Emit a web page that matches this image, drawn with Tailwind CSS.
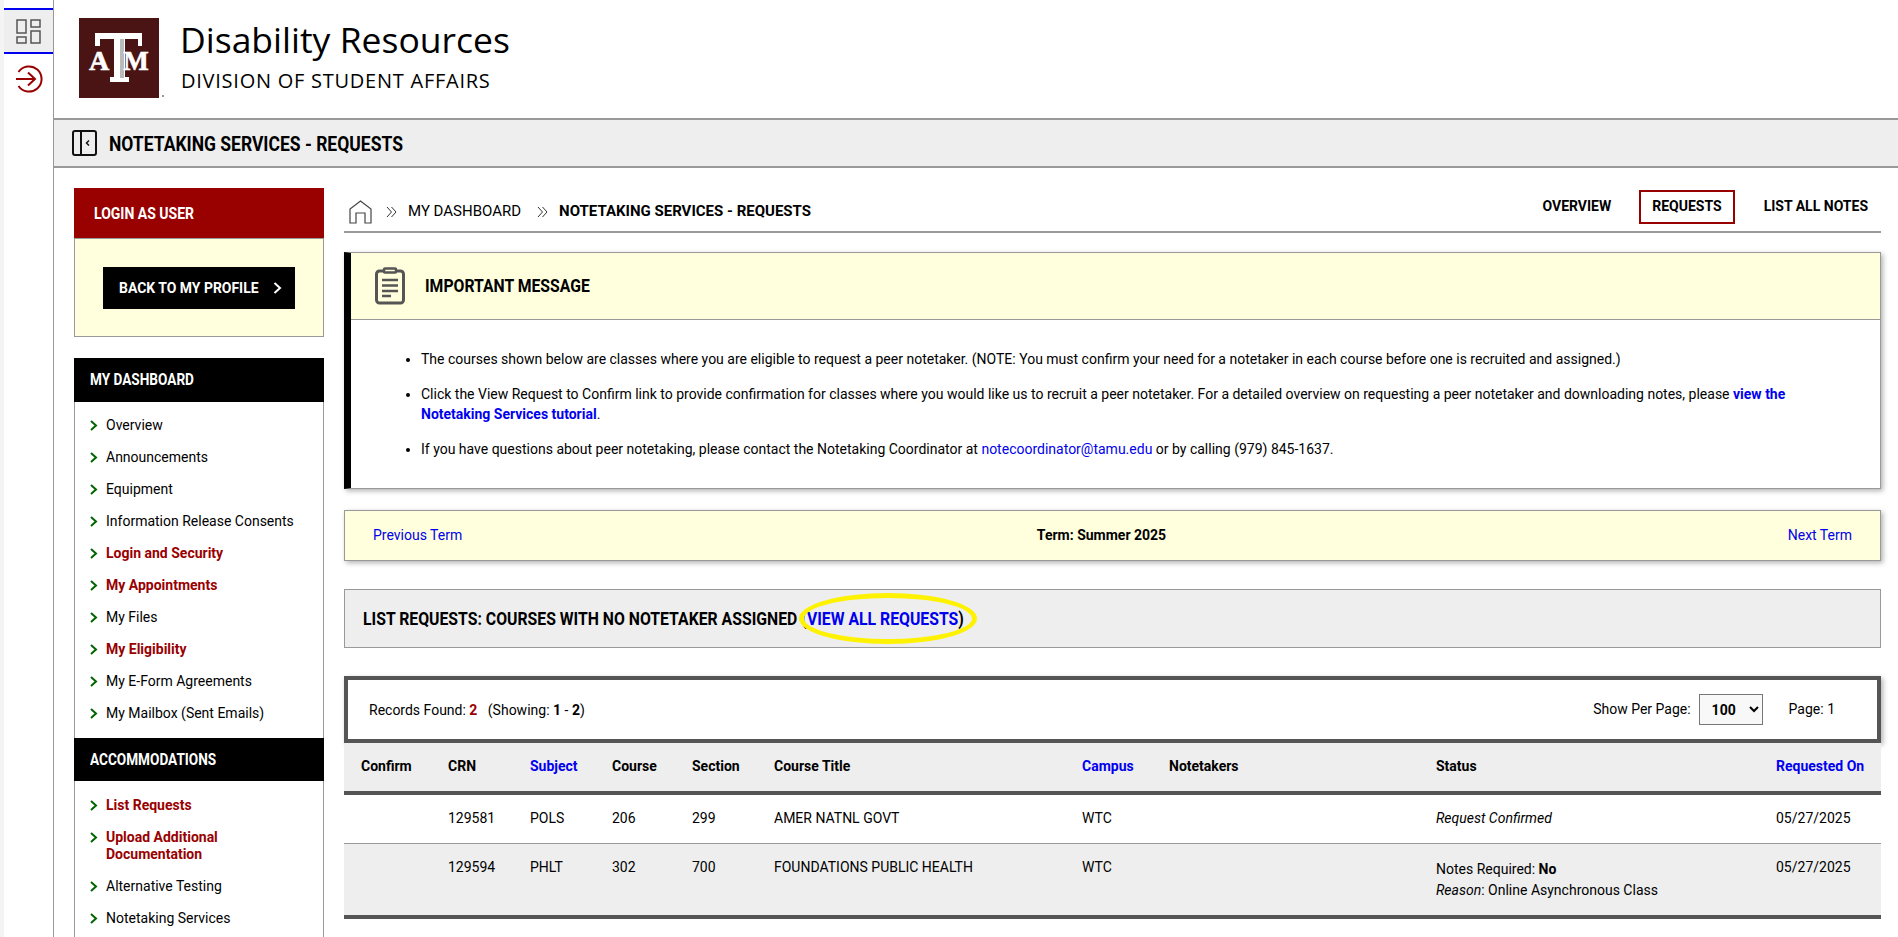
<!DOCTYPE html>
<html lang="en">
<head>
    <meta charset="UTF-8">
    <title>Notetaking Services - Requests</title>
    <script src="https://cdn.jsdelivr.net/npm/@tailwindcss/browser@4"></script>
</head>
<body class="bg-white text-black font-['Roboto',sans-serif] text-[14px] leading-[17px]">
<div class="flex h-[937px] overflow-hidden">

    <!-- Icon rail -->
    <div class="w-[54px] shrink-0 pl-[4px] bg-[#f4f4f4]">
        <div class="h-full bg-white border-r border-[#999] pt-[8px]">
            <div class="h-[46px] bg-[#eeeeee] border-y-2 border-[#0000ee] flex items-center justify-center">
                <svg width="26" height="25" viewBox="0 0 26 25" fill="none" stroke="#555" stroke-width="1.5">
                    <rect x="1" y="1" width="9" height="13"/>
                    <rect x="15" y="1" width="9" height="7"/>
                    <rect x="1" y="18" width="9" height="6"/>
                    <rect x="15" y="12" width="9" height="12"/>
                </svg>
            </div>
            <div class="pl-[11px] pt-[11px]">
                <svg width="28" height="28" viewBox="0 0 28 28" fill="none" stroke="#990000" stroke-width="2">
                    <path d="M3.5 7A12.6 12.6 0 1 1 3.5 21"/>
                    <path d="M1 14H20M13 7.5L20 14L13 20.5"/>
                </svg>
            </div>
        </div>
    </div>

    <div class="flex-1 min-w-0">
        <!-- Site header -->
        <div class="h-[118px] flex pl-[25px] pt-[18px]">
            <svg width="85" height="82" viewBox="0 0 85 82" class="shrink-0">
                <rect x="0" y="0" width="80" height="80" fill="#4a1414"/>
                <path d="M16 15H63V28H59V21H46V59H50V64H31V59H35V21H21V28H16Z" fill="#fff"/>
                <path d="M41 21H45V60H41Z" fill="#bbb"/>
                <text x="20" y="52" text-anchor="middle" fill="#fff" stroke="#fff" stroke-width="0.6" font-family="Liberation Serif" font-weight="700" font-size="28">A</text>
                <text x="57" y="52" text-anchor="middle" fill="#fff" stroke="#fff" stroke-width="0.6" font-family="Liberation Serif" font-weight="700" font-size="27">M</text>
                <circle cx="84" cy="78" r="1" fill="#777"/>
            </svg>
            <div class="ml-[17px] font-['Open_Sans',sans-serif]">
                <div class="text-[35.500px] leading-[44px] mt-[-1px] ml-[-1px]">Disability Resources</div>
                <div class="text-[20px] leading-[26px] mt-[7px] font-medium tracking-[0.75px]">DIVISION OF STUDENT AFFAIRS</div>
            </div>
        </div>

        <!-- Page title bar -->
        <div class="h-[50px] bg-[#eeeeee] border-y-2 border-[#999] flex items-center pl-[18px]">
            <svg width="25" height="26" viewBox="0 0 25 26" fill="none" stroke="#111" class="shrink-0">
                <rect x="1" y="1" width="23" height="24" rx="2" stroke-width="2"/>
                <path d="M9 1V25" stroke-width="2"/>
                <path d="M17 10.5L14.5 13L17 15.5" stroke-width="1.5"/>
            </svg>
            <h1 class="ml-[12px] text-[20px] font-bold leading-[24px] whitespace-nowrap origin-left scale-x-[.875] mt-[1px]">NOTETAKING SERVICES - REQUESTS</h1>
        </div>

        <div class="flex pl-[20px] pr-[17px] pt-[20px] gap-[20px]">
            <!-- Sidebar -->
            <aside class="w-[250px] shrink-0">
                <div class="h-[50px] bg-[#990000] text-white font-bold text-[16px] flex items-center pl-[20px]"><span class="origin-left scale-x-[.875]">LOGIN AS USER</span></div>
                <div class="h-[99px] bg-[#ffffdd] border border-t-[#999] border-[#999] pt-[28px] pl-[28px]">
                    <a class="w-[192px] h-[42px] bg-black text-white font-bold text-[15px] flex items-center pl-[16px] pr-[13px]">
                        <span class="origin-left scale-x-[.93] whitespace-nowrap">BACK TO MY PROFILE</span>
                        <svg width="9" height="12" viewBox="0 0 9 12" fill="none" stroke="#fff" stroke-width="2" class="ml-auto"><path d="M1.5 1L7 6L1.5 11"/></svg>
                    </a>
                </div>

                <div class="mt-[21px] h-[44px] pb-[1px] bg-black text-white font-bold text-[16px] flex items-center pl-[16px]"><span class="origin-left scale-x-[.85]">MY DASHBOARD</span></div>
                <ul class="border-x border-[#999] pt-[15px] pb-[1px] pl-[15px] pr-[15px] h-[336px]">
                    <li class="flex mb-[15px]"><svg width="8" height="11" viewBox="0 0 8 11" fill="none" stroke="#006600" stroke-width="2" class="mt-[3px] mr-[8px] shrink-0"><path d="M1 1L6 5.5L1 10"/></svg>Overview</li>
                    <li class="flex mb-[15px]"><svg width="8" height="11" viewBox="0 0 8 11" fill="none" stroke="#006600" stroke-width="2" class="mt-[3px] mr-[8px] shrink-0"><path d="M1 1L6 5.5L1 10"/></svg>Announcements</li>
                    <li class="flex mb-[15px]"><svg width="8" height="11" viewBox="0 0 8 11" fill="none" stroke="#006600" stroke-width="2" class="mt-[3px] mr-[8px] shrink-0"><path d="M1 1L6 5.5L1 10"/></svg>Equipment</li>
                    <li class="flex mb-[15px]"><svg width="8" height="11" viewBox="0 0 8 11" fill="none" stroke="#006600" stroke-width="2" class="mt-[3px] mr-[8px] shrink-0"><path d="M1 1L6 5.5L1 10"/></svg>Information Release Consents</li>
                    <li class="flex mb-[15px] font-bold text-[#990000]"><svg width="8" height="11" viewBox="0 0 8 11" fill="none" stroke="#006600" stroke-width="2" class="mt-[3px] mr-[8px] shrink-0"><path d="M1 1L6 5.5L1 10"/></svg>Login and Security</li>
                    <li class="flex mb-[15px] font-bold text-[#990000]"><svg width="8" height="11" viewBox="0 0 8 11" fill="none" stroke="#006600" stroke-width="2" class="mt-[3px] mr-[8px] shrink-0"><path d="M1 1L6 5.5L1 10"/></svg>My Appointments</li>
                    <li class="flex mb-[15px]"><svg width="8" height="11" viewBox="0 0 8 11" fill="none" stroke="#006600" stroke-width="2" class="mt-[3px] mr-[8px] shrink-0"><path d="M1 1L6 5.5L1 10"/></svg>My Files</li>
                    <li class="flex mb-[15px] font-bold text-[#990000]"><svg width="8" height="11" viewBox="0 0 8 11" fill="none" stroke="#006600" stroke-width="2" class="mt-[3px] mr-[8px] shrink-0"><path d="M1 1L6 5.5L1 10"/></svg>My Eligibility</li>
                    <li class="flex mb-[15px]"><svg width="8" height="11" viewBox="0 0 8 11" fill="none" stroke="#006600" stroke-width="2" class="mt-[3px] mr-[8px] shrink-0"><path d="M1 1L6 5.5L1 10"/></svg>My E-Form Agreements</li>
                    <li class="flex"><svg width="8" height="11" viewBox="0 0 8 11" fill="none" stroke="#006600" stroke-width="2" class="mt-[3px] mr-[8px] shrink-0"><path d="M1 1L6 5.5L1 10"/></svg>My Mailbox (Sent Emails)</li>
                </ul>
                <div class="h-[43px] bg-black text-white font-bold text-[16px] flex items-center pl-[16px]"><span class="origin-left scale-x-[.85]">ACCOMMODATIONS</span></div>
                <ul class="border-x border-[#999] pt-[16px] pl-[15px] pr-[15px] h-[200px]">
                    <li class="flex mb-[15px] font-bold text-[#990000]"><svg width="8" height="11" viewBox="0 0 8 11" fill="none" stroke="#006600" stroke-width="2" class="mt-[3px] mr-[8px] shrink-0"><path d="M1 1L6 5.5L1 10"/></svg>List Requests</li>
                    <li class="flex mb-[15px] font-bold text-[#990000]"><svg width="8" height="11" viewBox="0 0 8 11" fill="none" stroke="#006600" stroke-width="2" class="mt-[3px] mr-[8px] shrink-0"><path d="M1 1L6 5.5L1 10"/></svg><span>Upload Additional<br>Documentation</span></li>
                    <li class="flex mb-[15px]"><svg width="8" height="11" viewBox="0 0 8 11" fill="none" stroke="#006600" stroke-width="2" class="mt-[3px] mr-[8px] shrink-0"><path d="M1 1L6 5.5L1 10"/></svg>Alternative Testing</li>
                    <li class="flex"><svg width="8" height="11" viewBox="0 0 8 11" fill="none" stroke="#006600" stroke-width="2" class="mt-[3px] mr-[8px] shrink-0"><path d="M1 1L6 5.5L1 10"/></svg>Notetaking Services</li>
                </ul>
            </aside>

            <!-- Main column -->
            <main class="flex-1 min-w-0">
                <div class="h-[45px] border-b-2 border-[#999] flex items-start justify-between pl-[5px]">
                    <div class="flex items-center h-[37px] pt-[10px] text-[15px]">
                        <svg width="23" height="24" viewBox="0 0 23 24" fill="none" stroke="#444" stroke-width="1.2" class="shrink-0">
                            <path d="M1 23V9L11.5 1L22 9V23H16V13H7V23Z"/>
                        </svg>
                        <svg width="11" height="12" viewBox="0 0 11 12" fill="none" stroke="#333" class="ml-[14px]"><path d="M1 1L5.500 6L1 11M5.500 1L10 6L5.500 11"/></svg>
                        <span class="ml-[11px]">MY DASHBOARD</span>
                        <svg width="11" height="12" viewBox="0 0 11 12" fill="none" stroke="#333" class="ml-[16px]"><path d="M1 1L5.500 6L1 11M5.500 1L10 6L5.500 11"/></svg>
                        <span class="ml-[11px] font-bold">NOTETAKING SERVICES - REQUESTS</span>
                    </div>
                    <nav class="flex items-center font-bold mt-[2px] pr-[13px]">
                        <a class="mb-[1px]">OVERVIEW</a>
                        <a class="ml-[28px] h-[34px] border-2 border-[#990000] px-[11px] pb-[1px] flex items-center">REQUESTS</a>
                        <a class="ml-[29px] mb-[1px]">LIST ALL NOTES</a>
                    </nav>
                </div>

                <!-- Important message -->
                <section class="mt-[19px] h-[237px] border-l-[7px] border-l-black border-y border-r border-[#999] shadow-[2px_2px_5px_rgba(0,0,0,0.3)]">
                    <div class="h-[67px] pb-[1px] bg-[#ffffdd] border-b border-[#999] flex items-center pl-[24px]">
                        <svg width="30" height="38" viewBox="0 0 30 38" fill="none" stroke="#555" class="shrink-0">
                            <rect x="1.5" y="4" width="27" height="32" rx="3" stroke-width="3"/>
                            <rect x="9" y="1.5" width="12" height="4" rx="1" stroke-width="2.5" fill="#ffffdd"/>
                            <path d="M7 13H23M7 18.500H23M7 24H23M7 29H16" stroke-width="2.500"/>
                        </svg>
                        <h2 class="ml-[20px] font-bold text-[18px] whitespace-nowrap origin-left scale-x-[.875]">IMPORTANT MESSAGE</h2>
                    </div>
                    <ul class="list-disc pl-[70px] pr-[40px] pt-[29px] leading-[20px]">
                        <li>The courses shown below are classes where you are eligible to request a peer notetaker. (NOTE: You must confirm your need for a notetaker in each course before one is recruited and assigned.)</li>
                        <li class="mt-[15px]">Click the View Request to Confirm link to provide confirmation for classes where you would like us to recruit a peer notetaker. For a detailed overview on requesting a peer notetaker and downloading notes, please <a class="font-bold text-[#0000ee]">view the Notetaking Services tutorial</a>.</li>
                        <li class="mt-[15px]">If you have questions about peer notetaking, please contact the Notetaking Coordinator at <a class="text-[#0000ee]">notecoordinator@tamu.edu</a> or by calling (979) 845-1637.</li>
                    </ul>
                </section>

                <!-- Term switcher -->
                <div class="mt-[21px] h-[51px] bg-[#ffffdd] border border-[#999] shadow-[2px_2px_5px_rgba(0,0,0,0.3)] grid grid-cols-3 items-center px-[28px]">
                    <a class="text-[#0000ee]">Previous Term</a>
                    <div class="text-center font-bold pr-[22px]">Term: Summer 2025</div>
                    <a class="text-right text-[#0000ee]">Next Term</a>
                </div>

                <!-- List heading -->
                <div class="relative mt-[28px] h-[59px] bg-[#eeeeee] border border-[#999] flex items-center pl-[18px] font-bold text-[18px]">
                    <div class="whitespace-nowrap origin-left scale-x-[.877]">LIST REQUESTS: COURSES WITH NO NOTETAKER ASSIGNED (<a class="text-[#0000ee]">VIEW ALL REQUESTS</a>)</div>
                    <div class="absolute left-[454px] top-[3px] w-[178px] h-[51px] rounded-[50%] border-[5px] border-[#fff200]"></div>
                </div>

                <!-- Records toolbar -->
                <div class="mt-[28px] h-[67px] border-4 border-[#555] shadow-[2px_2px_5px_rgba(0,0,0,0.3)] flex items-center pl-[21px] pr-[42px]">
                    <div class="pt-[1px]">Records Found: <b class="text-[#990000]">2</b> &nbsp; (Showing: <b>1</b> - <b>2</b>)</div>
                    <div class="ml-auto">Show Per Page:</div>
                    <select class="ml-[8px] w-[64px] h-[31px] border border-[#777] bg-[#f8f8f8] font-bold pl-[8px]"><option>100</option></select>
                    <div class="ml-[26px]">Page: 1</div>
                </div>

                <table class="table-fixed w-full border-collapse">
                    <colgroup>
                        <col class="w-[87px]"><col class="w-[82px]"><col class="w-[82px]"><col class="w-[80px]"><col class="w-[82px]"><col class="w-[308px]"><col class="w-[87px]"><col class="w-[267px]"><col class="w-[340px]"><col class="w-[122px]">
                    </colgroup>
                    <thead>
                        <tr class="h-[50px] bg-[#eeeeee] border-b-4 border-[#555] text-left font-bold [&>th]:pl-[17px] [&>th]:pb-[1px]">
                            <th>Confirm</th><th>CRN</th><th class="text-[#0000ee]">Subject</th><th>Course</th><th>Section</th><th>Course Title</th><th class="text-[#0000ee]">Campus</th><th>Notetakers</th><th>Status</th><th class="text-[#0000ee] whitespace-nowrap">Requested On</th>
                        </tr>
                    </thead>
                    <tbody>
                        <tr class="h-[50px] border-b border-[#999] [&>td]:pl-[17px]">
                            <td></td><td>129581</td><td>POLS</td><td>206</td><td>299</td><td>AMER NATNL GOVT</td><td>WTC</td><td></td><td><i>Request Confirmed</i></td><td>05/27/2025</td>
                        </tr>
                        <tr class="h-[74px] bg-[#eeeeee] border-b-4 border-[#555] align-top [&>td]:pl-[17px] [&>td]:pt-[15px]">
                            <td></td><td>129594</td><td>PHLT</td><td>302</td><td>700</td><td>FOUNDATIONS PUBLIC HEALTH</td><td>WTC</td><td></td><td class="leading-[21px]">Notes Required: <b>No</b><br><i>Reason</i>: Online Asynchronous Class</td><td>05/27/2025</td>
                        </tr>
                    </tbody>
                </table>
            </main>
        </div>
    </div>
</div>
</body>
</html>
